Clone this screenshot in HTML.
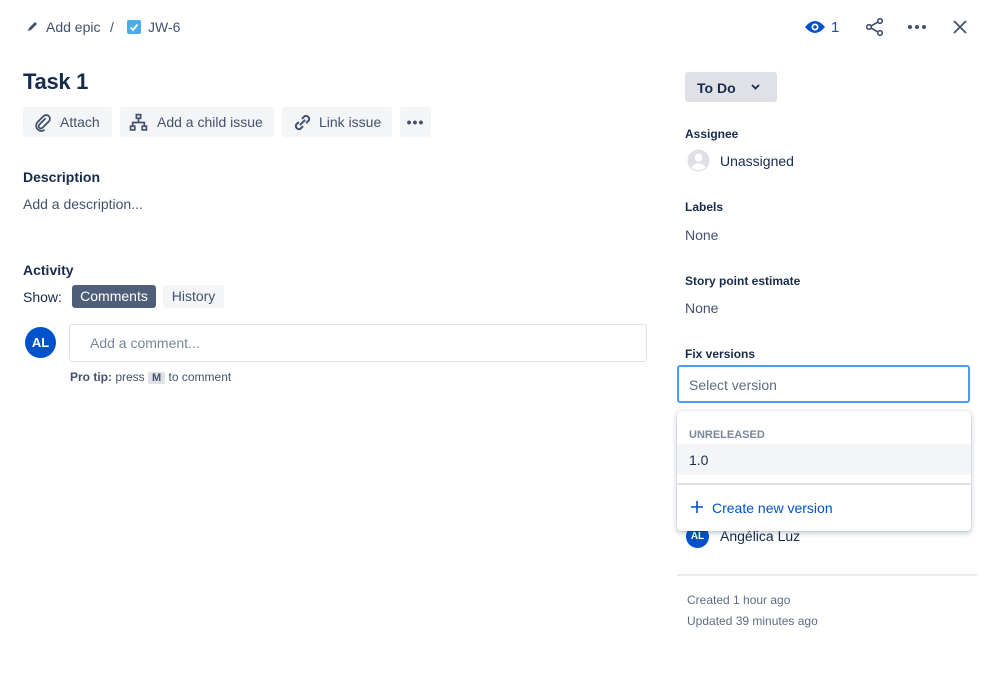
<!DOCTYPE html>
<html><head><meta charset="utf-8"><style>
*{box-sizing:border-box;margin:0;padding:0}
body{width:999px;height:678px;background:#fff;font-family:"Liberation Sans",sans-serif;color:#172b4d;position:relative;overflow:hidden;font-size:14px}
.a{position:absolute;white-space:nowrap}
.btn{position:absolute;background:#f4f5f7;border-radius:3px;height:30px;top:107px;color:#42526e;font-size:14px;display:flex;align-items:center}
.lbl{font-size:12px;font-weight:bold;color:#172b4d}
.val{font-size:14px;color:#42526e}
</style></head><body>
<svg class="a" style="left:26px;top:20px" width="13" height="13" viewBox="0 0 13 13"><path d="M2 11 L3 8 L9 2 L11 4 L5 10 Z" fill="#42526e"/></svg>
<div class="a" style="left:46px;top:19px;color:#42526e;font-size:14px">Add epic</div>
<div class="a" style="left:110px;top:19px;color:#42526e;font-size:14px">/</div>
<div class="a" style="left:127px;top:20px;width:14px;height:14px;background:#4bade8;border-radius:2px"><svg width="14" height="14"><path d="M3.5 7.5 L6 10 L10.5 4.5" stroke="#fff" stroke-width="1.8" fill="none"/></svg></div>
<div class="a" style="left:148px;top:19px;color:#42526e;font-size:14px">JW-6</div>
<div class="a" style="left:23px;top:69px;font-size:22px;font-weight:bold;color:#172b4d;letter-spacing:-0.3px">Task 1</div>
<div class="btn" style="left:23px;width:89px"><svg style="margin-left:10px" width="19" height="19" viewBox="0 0 18 18"><path d="M12 5 L6 11 a2 2 0 0 0 3 3 L15 8 a3.5 3.5 0 0 0 -5 -5 L4 9 a5 5 0 0 0 7 7" stroke="#42526e" stroke-width="1.7" fill="none"/></svg><span style="margin-left:8px">Attach</span></div>
<div class="btn" style="left:120px;width:154px"><svg style="margin-left:9px" width="19" height="19" viewBox="0 0 18 18"><rect x="7" y="1.5" width="4" height="3.5" stroke="#42526e" stroke-width="1.6" fill="none"/><rect x="1.5" y="12.5" width="4" height="3.5" stroke="#42526e" stroke-width="1.6" fill="none"/><rect x="12.5" y="12.5" width="4" height="3.5" stroke="#42526e" stroke-width="1.6" fill="none"/><path d="M9 5V9M3.5 12.5V9H14.5V12.5" stroke="#42526e" stroke-width="1.6" fill="none"/></svg><span style="margin-left:9px">Add a child issue</span></div>
<div class="btn" style="left:282px;width:110px"><svg style="margin-left:10px" width="21" height="19" viewBox="0 0 20 18"><path d="M8 11 L12 7 M10 5 l2-2 a3 3 0 0 1 4 4 l-2 2 M10 13 l-2 2 a3 3 0 0 1 -4 -4 l2 -2" stroke="#42526e" stroke-width="1.9" fill="none" stroke-linecap="round"/></svg><span style="margin-left:6px">Link issue</span></div>
<div class="btn" style="left:400px;width:31px;justify-content:center;font-weight:bold;letter-spacing:1px">•••</div>
<div class="a lbl" style="left:23px;top:169px;font-size:14px">Description</div>
<div class="a val" style="left:23px;top:196px">Add a description...</div>
<div class="a lbl" style="left:23px;top:262px;font-size:14px">Activity</div>
<div class="a" style="left:23px;top:289px;color:#172b4d">Show:</div>
<div class="a" style="left:72px;top:285px;width:84px;height:23px;background:#505f79;color:#fff;border-radius:3px;text-align:center;line-height:23px">Comments</div>
<div class="a" style="left:163px;top:285px;width:61px;height:23px;background:#f4f5f7;color:#42526e;border-radius:3px;text-align:center;line-height:23px">History</div>
<div class="a" style="left:25px;top:327px;width:31px;height:31px;border-radius:50%;background:#0052cc;color:#fff;font-weight:bold;font-size:13px;text-align:center;line-height:31px">AL</div>
<div class="a" style="left:69px;top:324px;width:578px;height:38px;border:1px solid #dfe1e6;border-radius:3px;color:#7a869a;padding:10px 20px">Add a comment...</div>
<div class="a" style="left:70px;top:370px;font-size:12px;color:#42526e"><b>Pro tip:</b> press <span style="background:#dfe1e6;padding:0 4px;border-radius:2px;font-weight:bold;font-size:11px">M</span> to comment</div>
<svg class="a" style="left:804px;top:19px" width="22" height="16" viewBox="0 0 22 16"><path d="M1 8 Q11 -4 21 8 Q11 20 1 8Z" fill="#0052cc"/><circle cx="11" cy="8" r="3.5" fill="#fff"/><circle cx="11" cy="8" r="1.8" fill="#0052cc"/></svg>
<div class="a" style="left:831px;top:19px;color:#0052cc;font-size:15px">1</div>
<svg class="a" style="left:865px;top:17px" width="20" height="20" viewBox="0 0 20 20"><circle cx="15" cy="4" r="2.3" stroke="#42526e" stroke-width="1.6" fill="none"/><circle cx="4" cy="10" r="2.3" stroke="#42526e" stroke-width="1.6" fill="none"/><circle cx="15" cy="16" r="2.3" stroke="#42526e" stroke-width="1.6" fill="none"/><path d="M6 9 L13 5 M6 11 L13 15" stroke="#42526e" stroke-width="1.6"/></svg>
<svg class="a" style="left:907px;top:24px" width="20" height="6"><circle cx="3" cy="3" r="2" fill="#42526e"/><circle cx="10" cy="3" r="2" fill="#42526e"/><circle cx="17" cy="3" r="2" fill="#42526e"/></svg>
<svg class="a" style="left:952px;top:19px" width="16" height="16"><path d="M2 2L14 14M14 2L2 14" stroke="#42526e" stroke-width="1.8"/></svg>
<div class="a" style="left:685px;top:72px;width:92px;height:30px;background:#dfe1e6;border-radius:3px;font-weight:bold;color:#172b4d;padding:8px 0 0 12px">To Do<svg style="position:absolute;left:66px;top:12px" width="9" height="6"><path d="M1 1L4.5 4.5L8 1" stroke="#172b4d" stroke-width="1.8" fill="none"/></svg></div>
<div class="a lbl" style="left:685px;top:127px">Assignee</div>
<svg class="a" style="left:687px;top:149px" width="23" height="23" viewBox="0 0 24 24"><circle cx="12" cy="12" r="11.5" fill="#dfe1e6"/><circle cx="12" cy="9" r="4" fill="#fff"/><path d="M4.5 19 Q12 11 19.5 19 Q12 25 4.5 19Z" fill="#fff"/></svg>
<div class="a" style="left:720px;top:153px;color:#172b4d">Unassigned</div>
<div class="a lbl" style="left:685px;top:200px">Labels</div>
<div class="a val" style="left:685px;top:227px">None</div>
<div class="a lbl" style="left:685px;top:274px">Story point estimate</div>
<div class="a val" style="left:685px;top:300px">None</div>
<div class="a lbl" style="left:685px;top:347px">Fix versions</div>
<div class="a" style="left:677px;top:365px;width:293px;height:38px;border:2px solid #4c9aff;border-radius:3px;color:#5e6c84;padding:10px 10px">Select version</div>
<div class="a" style="left:686px;top:525px;width:23px;height:23px;border-radius:50%;background:#0052cc;color:#fff;font-size:10px;font-weight:bold;text-align:center;line-height:23px">AL</div>
<div class="a" style="left:720px;top:528px;color:#172b4d">Angélica Luz</div>
<div class="a" style="left:677px;top:574px;width:300px;height:2px;background:#ebecf0"></div>
<div class="a" style="left:687px;top:593px;font-size:12px;color:#5e6c84">Created 1 hour ago</div>
<div class="a" style="left:687px;top:614px;font-size:12px;color:#5e6c84">Updated 39 minutes ago</div>
<div class="a" style="left:677px;top:411px;width:294px;height:120px;background:#fff;border-radius:4px;box-shadow:0 2px 6px rgba(9,30,66,.25),0 0 1px rgba(9,30,66,.3)">
<div class="a" style="left:12px;top:18px;font-size:11px;font-weight:bold;color:#7a869a">UNRELEASED</div>
<div class="a" style="left:0;top:33px;width:294px;height:31px;background:#f4f5f7"></div>
<div class="a" style="left:12px;top:41px;color:#172b4d">1.0</div>
<div class="a" style="left:0;top:72px;width:294px;height:2px;background:#dfe1e6"></div>
<svg class="a" style="left:14px;top:90px" width="12" height="12"><path d="M6 0V12M0 6H12" stroke="#0052cc" stroke-width="1.6"/></svg>
<div class="a" style="left:35px;top:89px;color:#0052cc">Create new version</div>
</div>
</body></html>
